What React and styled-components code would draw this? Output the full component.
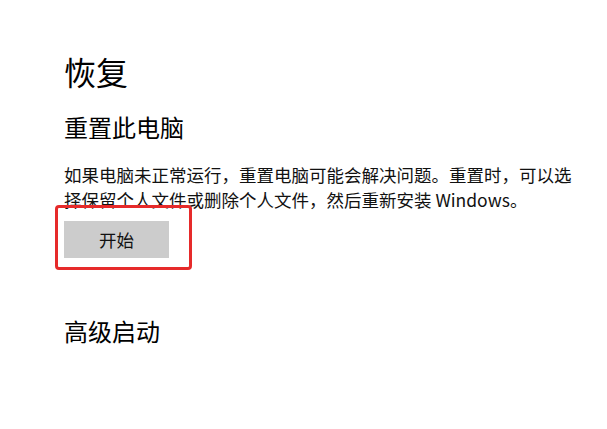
import React from "react";
import styled, { createGlobalStyle } from "styled-components";

const Global = createGlobalStyle`
  html, body { margin: 0; padding: 0; background: #ffffff; }
  body {
    width: 607px;
    height: 429px;
    overflow: hidden;
    font-family: "Noto Sans CJK SC", "Microsoft YaHei", "Noto Sans", sans-serif;
    color: #000000;
  }
`;

const Page = styled.main`
  display: flex;
  flex-direction: column;
  align-items: flex-start;
  padding: 51px 0 0 64px;
`;

const Title = styled.h1`
  margin: 0;
  font-size: 32px;
  line-height: 40px;
  font-weight: 400;
`;

const Heading = styled.h2`
  margin: ${(p) => p.$top}px 0 0;
  font-size: 24px;
  line-height: 32px;
  font-weight: 400;
`;

const Body = styled.p`
  margin: 19px 0 0;
  width: 512px;
  font-size: 17.5px;
  line-height: 25px;
  font-weight: 400;
  color: #111111;
`;

const ButtonWrap = styled.div`
  position: relative;
  margin-top: 9px;
`;

const Button = styled.button`
  display: flex;
  align-items: center;
  justify-content: center;
  width: 105px;
  height: 37px;
  padding: 0;
  border: none;
  background: #cccccc;
  font-family: inherit;
  font-size: 17.5px;
  color: #111111;
`;

const Highlight = styled.div`
  position: absolute;
  left: -9px;
  top: -16px;
  right: -23px;
  bottom: -12px;
  border: 3px solid #e62a2a;
  border-radius: 4px;
  pointer-events: none;
`;

export default function App() {
  return (
    <>
      <Global />
      <Page>
        <Title>恢复</Title>
        <Heading $top={20}>重置此电脑</Heading>
        <Body>
          如果电脑未正常运行，重置电脑可能会解决问题。重置时，可以选择保留个人文件或删除个人文件，然后重新安装 Windows。
        </Body>
        <ButtonWrap>
          <Button>开始</Button>
          <Highlight />
        </ButtonWrap>
        <Heading $top={57}>高级启动</Heading>
      </Page>
    </>
  );
}
